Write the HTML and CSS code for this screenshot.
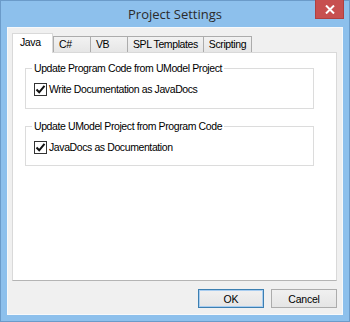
FILE: index.html
```html
<!DOCTYPE html>
<html lang="en">
<head>
    <meta charset="UTF-8">
    <title>Project Settings</title>
    <link rel="stylesheet" href="styles.css">
</head>
<body>
    <div class="window">
        <div class="titlebar">
            <span></span>
            <h1 class="title">Project Settings</h1>
            <button class="close-button" aria-label="Close">
                <svg width="10" height="9" viewBox="0 0 10 9">
                    <path d="M1 0.5 L9 8.5 M9 0.5 L1 8.5" stroke="#fff" stroke-width="2"/>
                </svg>
            </button>
        </div>
        <div class="client">
            <div class="tabs">
                <div class="tab active">Java</div>
                <div class="tab">C#</div>
                <div class="tab">VB</div>
                <div class="tab">SPL Templates</div>
                <div class="tab">Scripting</div>
            </div>
            <div class="pane">
                <fieldset class="group">
                    <legend>Update Program Code from UModel Project</legend>
                    <label class="check">
                        <span class="box">
                            <svg width="11" height="11" viewBox="0 0 11 11">
                                <path d="M1.5 5.5 L4.2 8.3 L9.5 1.8" fill="none" stroke="#111" stroke-width="2"/>
                            </svg>
                        </span>
                        Write Documentation as JavaDocs
                    </label>
                </fieldset>
                <fieldset class="group">
                    <legend>Update UModel Project from Program Code</legend>
                    <label class="check">
                        <span class="box">
                            <svg width="11" height="11" viewBox="0 0 11 11">
                                <path d="M1.5 5.5 L4.2 8.3 L9.5 1.8" fill="none" stroke="#111" stroke-width="2"/>
                            </svg>
                        </span>
                        JavaDocs as Documentation
                    </label>
                </fieldset>
            </div>
            <div class="buttons">
                <button class="btn default">OK</button>
                <button class="btn">Cancel</button>
            </div>
        </div>
    </div>
</body>
</html>
```

FILE: styles.css
```css
* {
    box-sizing: border-box;
    margin: 0;
    padding: 0;
}

body {
    width: 350px;
    height: 322px;
    font-family: 'Liberation Sans', Arial, sans-serif;
    font-size: 10.5px;
    letter-spacing: -0.4px;
    color: #000;
    background-color: #8cbfea;
}

.window {
    width: 350px;
    height: 322px;
    display: flex;
    flex-direction: column;
    background-color: #8dc0ec;
    border: 1px solid #6b9bc9;
    padding: 0 6px 6px 6px;
}

.titlebar {
    height: 26px;
    display: grid;
    grid-template-columns: 1fr auto 1fr;
    align-items: start;
}

.title {
    font-family: 'Open Sans', 'Liberation Sans', sans-serif;
    font-weight: normal;
    font-size: 13px;
    letter-spacing: 0;
    color: #2b2b2b;
    line-height: 16px;
    padding-top: 5px;
}

.close-button {
    justify-self: end;
    width: 29px;
    height: 19px;
    margin-top: -1px;
    margin-right: -1px;
    border: 1px solid #b04040;
    border-top: none;
    background-color: #c75050;
    display: flex;
    justify-content: center;
    align-items: center;
}

.client {
    flex: 1;
    display: flex;
    flex-direction: column;
    background-color: #f0f0f0;
    border: 1px solid #f7f9fb;
    padding: 5px 5px 6px 4px;
}

.tabs {
    display: flex;
    align-items: flex-end;
    height: 19px;
}

.tab {
    height: 16px;
    min-width: 38px;
    padding: 0 5px;
    margin-left: -1px;
    line-height: 15px;
    border: 1px solid #acacac;
    border-bottom: none;
    background: linear-gradient(#f2f2f2, #e6e6e6);
    white-space: nowrap;
}

.tab.active {
    height: 20px;
    min-width: 41px;
    padding: 0 7px;
    margin-left: 0;
    margin-right: 1px;
    margin-bottom: -1px;
    line-height: 17px;
    border-color: #d9d9d9;
    background: #fff;
    position: relative;
    z-index: 1;
}

.pane {
    flex: 1;
    background-color: #fff;
    border: 1px solid #d9d9d9;
    border-bottom-color: #b4b4b4;
    padding: 9px 22px 0 12px;
    display: flex;
    flex-direction: column;
    gap: 11px;
}

.group {
    border: 1px solid #dcdcdc;
    padding: 8px 8px 12px 8px;
}

.group + .group {
    padding-bottom: 11px;
}

.group legend {
    padding: 0 2px;
    margin-left: -2px;
    line-height: 13px;
    color: #000;
}

.check {
    display: flex;
    align-items: center;
    gap: 2px;
    line-height: 13px;
}

.box {
    width: 13px;
    height: 13px;
    border: 1px solid #333;
    background-color: #fff;
    display: flex;
    justify-content: center;
    align-items: center;
}

.buttons {
    display: flex;
    justify-content: flex-end;
    gap: 7px;
    margin-top: 8px;
}

.btn {
    width: 66px;
    height: 19px;
    font-family: 'Liberation Sans', Arial, sans-serif;
    font-size: 10.5px;
    letter-spacing: -0.2px;
    color: #000;
    border: 1px solid #acacac;
    background: linear-gradient(#f0f0f0, #e5e5e5);
}

.btn.default {
    border-color: #3c7fb1;
    box-shadow: inset 0 0 0 1px #a8cdf0;
}
```
